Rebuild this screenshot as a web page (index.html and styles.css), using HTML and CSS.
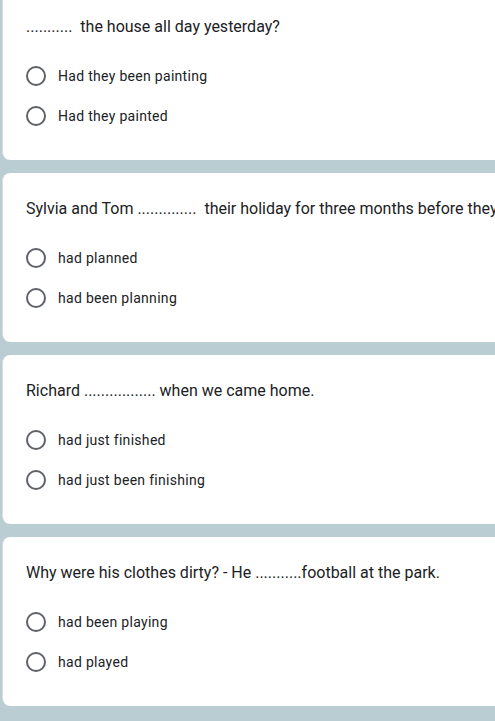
FILE: index.html
```html
<!DOCTYPE html>
<html>
<head>
<meta charset="utf-8">
<link rel="stylesheet" href="styles.css">
</head>
<body>
<div class="list">
  <div class="card first">
    <div class="question">........... &nbsp;the house all day yesterday?</div>
    <div class="options">
      <div class="option"><span class="radio"></span><span class="label">Had they been painting</span></div>
      <div class="option"><span class="radio"></span><span class="label">Had they painted</span></div>
    </div>
  </div>
  <div class="card">
    <div class="question">Sylvia and Tom .............. &nbsp;their holiday for three months before they</div>
    <div class="options">
      <div class="option"><span class="radio"></span><span class="label">had planned</span></div>
      <div class="option"><span class="radio"></span><span class="label">had been planning</span></div>
    </div>
  </div>
  <div class="card">
    <div class="question">Richard ................. when we came home.</div>
    <div class="options">
      <div class="option"><span class="radio"></span><span class="label">had just finished</span></div>
      <div class="option"><span class="radio"></span><span class="label">had just been finishing</span></div>
    </div>
  </div>
  <div class="card">
    <div class="question">Why were his clothes dirty? - He ...........football at the park.</div>
    <div class="options">
      <div class="option"><span class="radio"></span><span class="label">had been playing</span></div>
      <div class="option"><span class="radio"></span><span class="label">had played</span></div>
    </div>
  </div>
</div>
</body>
</html>
```

FILE: styles.css
```css
html, body {
  margin: 0;
  padding: 0;
  height: 100%;
  overflow: hidden;
}
body {
  background: #b9cdd2;
  font-family: Roboto, "Noto Sans", Arial, sans-serif;
  color: #202124;
}
.list {
  display: flex;
  flex-direction: column;
  gap: 13px;
  margin-top: -9px;
  width: 640px;
}
.card {
  background: #ffffff;
  margin-left: 2px;
  border-left: 1px solid #dadce0;
  border-radius: 8px;
  height: 169px;
  box-sizing: border-box;
  padding: 24px 0 24px 23px;
}
.question {
  font-size: 16px;
  line-height: 24px;
  white-space: nowrap;
  letter-spacing: 0;
}
.options {
  margin-top: 17px;
  display: flex;
  flex-direction: column;
}
.option {
  height: 40px;
  display: flex;
  align-items: center;
  gap: 12px;
}
.radio {
  width: 16px;
  height: 16px;
  border: 2px solid #5f6368;
  border-radius: 50%;
  flex: none;
}
.label {
  font-size: 14px;
  letter-spacing: 0.3px;
}
```
